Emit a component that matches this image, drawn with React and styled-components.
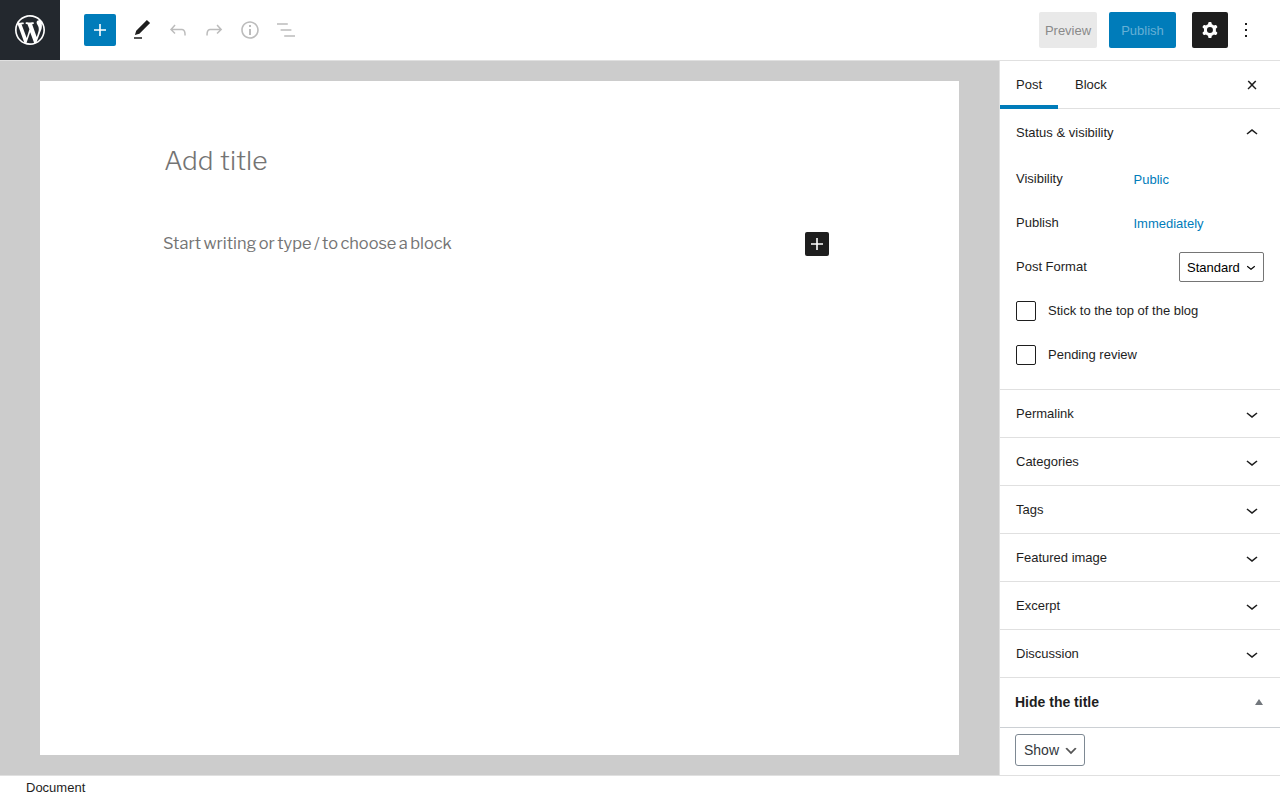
import React from 'react';
import styled, { createGlobalStyle } from 'styled-components';

const GlobalStyle = createGlobalStyle`
    * {
        box-sizing: border-box;
    }

    body {
        margin: 0;
        background: #fff;
        color: #1e1e1e;
        font-family: "Liberation Sans", Arial, sans-serif;
        font-size: 13px;
        line-height: 18px;
    }

    button {
        font-family: inherit;
        font-size: 13px;
        border: 0;
        padding: 0;
        background: none;
        color: inherit;
    }

    svg {
        display: block;
        fill: currentColor;
        flex: none;
    }
`;

const Page = styled.div`
    height: 800px;
    display: flex;
    flex-direction: column;
    overflow: hidden;
`;

const Header = styled.header`
    height: 61px;
    display: flex;
    align-items: flex-start;
    border-bottom: 1px solid #e0e0e0;
`;

const Logo = styled.a`
    width: 60px;
    height: 60px;
    display: flex;
    align-items: center;
    justify-content: center;
    background: #23282e;
    color: #fff;
`;

const Toolbar = styled.div`
    height: 60px;
    display: flex;
    align-items: center;
    padding-left: 24px;
`;

const ToolButton = styled.button`
    width: 36px;
    height: 36px;
    display: flex;
    align-items: center;
    justify-content: center;
    color: ${props => props.$disabled ? '#bcbcbc' : '#1e1e1e'};
`;

const InsertButton = styled(ToolButton)`
    width: 32px;
    height: 32px;
    margin-right: 8px;
    border-radius: 2px;
    background: #007cba;
    color: #fff;
`;

const Settings = styled.div`
    height: 60px;
    margin-left: auto;
    padding-right: 16px;
    display: flex;
    align-items: center;
`;

const TextButton = styled.button`
    width: ${props => props.$width}px;
    height: 36px;
    padding-top: 1px;
    margin-right: ${props => props.$gap}px;
    border-radius: 2px;
    background: ${props => props.$primary ? '#007cba' : '#e9e9e9'};
    color: ${props => props.$primary ? '#66b0d6' : '#8a8a8a'};
`;

const CogButton = styled(ToolButton)`
    border-radius: 2px;
    background: #1e1e1e;
    color: #fff;
`;

const Body = styled.div`
    flex: 1;
    min-height: 0;
    display: flex;
`;

const Editor = styled.main`
    flex: 1;
    padding: 20px 40px;
    background: #ccc;
`;

const Canvas = styled.div`
    height: 100%;
    padding: 59px 130px 0 123px;
    background: #fff;
    color: #747474;
    font-family: "Libre Franklin", "Open Sans", sans-serif;
`;

const Title = styled.h1`
    margin: 0;
    padding-left: 1px;
    font-size: 26.4px;
    font-weight: 300;
    line-height: 40px;
    word-spacing: 1px;
`;

const Block = styled.div`
    margin-top: 52px;
    height: 24px;
    display: flex;
    align-items: center;
    justify-content: space-between;
`;

const Paragraph = styled.p`
    margin: 0;
    padding-bottom: 2px;
    font-size: 16.4px;
    line-height: 24px;
    word-spacing: -1.1px;
`;

const BlockInserter = styled.button`
    width: 24px;
    height: 24px;
    border-radius: 2px;
    background: #1e1e1e;
    color: #fff;
`;

const Sidebar = styled.aside`
    width: 281px;
    border-left: 1px solid #e0e0e0;
    overflow: hidden;
`;

const Tabs = styled.div`
    height: 48px;
    display: flex;
    align-items: stretch;
    box-shadow: inset 0 -1px 0 #e0e0e0;
`;

const Tab = styled.button`
    padding: 0 16px 1px;
    margin-right: 1px;
    box-shadow: ${props => props.$active ? 'inset 0 -4px 0 #007cba' : 'none'};
`;

const CloseButton = styled(ToolButton)`
    width: 24px;
    height: 48px;
    margin: 0 16px 0 auto;
`;

const Panel = styled.section`
    border-bottom: 1px solid #e0e0e0;
`;

const PanelHead = styled.h2`
    margin: 0;
    height: ${props => props.$open ? 48 : 47}px;
    padding: 0 16px;
    display: flex;
    align-items: center;
    justify-content: space-between;
    font-size: 13px;
    font-weight: 400;
`;

const PanelBody = styled.div`
    padding: 0 16px 12px;
`;

const Row = styled.div`
    height: 44px;
    display: flex;
    align-items: center;
`;

const Label = styled.span`
    width: 117.5px;
    padding-bottom: 1px;
`;

const LinkButton = styled.button`
    color: #007cba;
`;

const Select = styled.div`
    width: 85px;
    height: 30px;
    margin-left: auto;
    padding: 0 3px 0 7px;
    display: flex;
    align-items: center;
    justify-content: space-between;
    border: 1px solid #757575;
    border-radius: 2px;
    color: #000;
    line-height: 16px;

    span {
        padding-top: 2px;
    }
`;

const Checkbox = styled.span`
    width: 20px;
    height: 20px;
    margin-right: 12px;
    border: 1px solid #1e1e1e;
    border-radius: 2px;
`;

const CheckLabel = styled.span`
    padding-bottom: 1px;
`;

const MetaHead = styled.h2`
    margin: 0;
    height: 50px;
    padding: 0 17px 2px 15px;
    display: flex;
    align-items: center;
    justify-content: space-between;
    border-bottom: 1px solid #ccd0d4;
    font-size: 14px;
    font-weight: 700;
`;

const Triangle = styled.span`
    border: 4px solid transparent;
    border-top: 0;
    border-bottom: 6px solid #72777c;
`;

const MetaSelect = styled(Select)`
    width: 70px;
    height: 32px;
    margin: 6px 0 0 15px;
    padding: 0 5px 0 8px;
    border-color: #7e8993;
    border-radius: 3px;
    color: #32373c;
    font-size: 14px;

    span {
        padding-top: 0;
    }

    svg {
        margin-top: 1px;
        fill: #555;
    }
`;

const Footer = styled.footer`
    height: 25px;
    padding-left: 26px;
    border-top: 1px solid #e0e0e0;
    line-height: 23px;
`;

const paths = {
    plus: 'M18 11.2h-5.2V6h-1.6v5.2H6v1.6h5.2V18h1.6v-5.2H18z',
    edit: 'M20.1 5.1L16.9 2 6.2 12.7l-1.3 4.4 4.5-1.3L20.1 5.1zM4 20.8h8v-1.5H4v1.5z',
    undo: 'M18.3 11.7c-.6-.6-1.4-.9-2.3-.9H6.7l2.9-3.3-1.1-1-4.5 5L8.5 16l1-1-2.7-2.7H16c.5 0 .9.2 1.3.5 1 1 1 3.4 1 4.5v.3h1.5v-.2c0-1.5 0-4.3-1.5-5.7z',
    redo: 'M15.6 6.5l-1.1 1 2.9 3.3H8c-.9 0-1.7.3-2.3.9-1.4 1.5-1.4 4.2-1.4 5.6v.2h1.5v-.3c0-1.1 0-3.5 1-4.5.3-.3.7-.5 1.3-.5h9.2L14.5 15l1.1 1.1 4.6-4.6-4.6-5z',
    info: 'M12 3.2c-4.8 0-8.8 3.9-8.8 8.8 0 4.8 3.9 8.8 8.8 8.8 4.8 0 8.8-3.9 8.8-8.8 0-4.8-4-8.8-8.8-8.8zm0 16c-4 0-7.2-3.3-7.2-7.2C4.8 8 8 4.8 12 4.8s7.2 3.3 7.2 7.2c0 4-3.2 7.2-7.2 7.2zM11 17h2v-6h-2v6zm0-8h2V7h-2v2z',
    list: 'M13.8 5.2H3v1.5h10.8V5.2zm-3.6 12v1.5H21v-1.5H10.2zm7.2-6H6.6v1.5h10.8v-1.5z',
    cog: 'M10.289 4.836A1 1 0 0111.275 4h1.306a1 1 0 01.987.836l.244 1.466c.787.26 1.503.679 2.108 1.218l1.393-.522a1 1 0 011.216.437l.653 1.13a1 1 0 01-.23 1.273l-1.148.944a6.025 6.025 0 010 2.435l1.149.946a1 1 0 01.23 1.272l-.653 1.13a1 1 0 01-1.216.437l-1.394-.522c-.605.54-1.32.958-2.108 1.218l-.244 1.466a1 1 0 01-.987.836h-1.306a1 1 0 01-.986-.836l-.244-1.466a5.995 5.995 0 01-2.108-1.218l-1.394.522a1 1 0 01-1.217-.436l-.653-1.131a1 1 0 01.23-1.272l1.149-.946a6.026 6.026 0 010-2.435l-1.148-.944a1 1 0 01-.23-1.272l.653-1.131a1 1 0 011.217-.437l1.393.522a5.994 5.994 0 012.108-1.218l.244-1.466zM14.929 12a3 3 0 11-6 0 3 3 0 016 0z',
    more: 'M13 19h-2v-2h2v2zm0-6h-2v-2h2v2zm0-6h-2V5h2v2z',
    close: 'M13 11.9l3.3-3.4-1.1-1-3.2 3.3-3.2-3.3-1.1 1 3.3 3.4-3.5 3.6 1 1L12 13l3.5 3.5 1-1z',
    up: 'M6.5 12.4L12 8l5.5 4.4-.9 1.2L12 10l-4.5 3.6-1-1.2z',
    down: 'M17.5 11.6L12 16l-5.5-4.4.9-1.2L12 14l4.5-3.6 1 1.2z',
    arrow: 'M5 6l5 5 5-5 2 1-7 7-7-7 2-1z',
    wordpress: 'M20 10c0-5.51-4.49-10-10-10C4.48 0 0 4.49 0 10c0 5.52 4.48 10 10 10 5.51 0 10-4.48 10-10zM7.78 15.37L4.37 6.22c.55-.02 1.17-.08 1.17-.08.5-.06.44-1.13-.06-1.11 0 0-1.45.11-2.37.11-.18 0-.37 0-.58-.01C4.12 2.69 6.87 1.11 10 1.11c2.33 0 4.45.87 6.05 2.34-.68-.11-1.65.39-1.65 1.58 0 .74.45 1.36.9 2.1.35.61.55 1.36.55 2.46 0 1.49-1.4 5-1.4 5l-3.03-8.37c.54-.02.82-.17.82-.17.5-.05.44-1.25-.06-1.22 0 0-1.44.12-2.38.12-.87 0-2.33-.12-2.33-.12-.5-.03-.56 1.2-.06 1.22l.92.08 1.26 3.41zM17.41 10c.24-.64.74-1.87.43-4.25.7 1.29 1.05 2.71 1.05 4.25 0 3.29-1.73 6.24-4.4 7.78.97-2.59 1.94-5.2 2.92-7.78zM6.1 18.09C3.12 16.65 1.11 13.53 1.11 10c0-1.3.23-2.48.72-3.59C3.25 10.3 4.67 14.2 6.1 18.09zm4.03-6.63l2.58 6.98c-.86.29-1.76.45-2.71.45-.79 0-1.57-.11-2.29-.33.81-2.38 1.62-4.74 2.42-7.1z',
};

const Icon = ({ name, size = 24, viewBox = '0 0 24 24' }) => (
    <svg width={size} height={size} viewBox={viewBox} aria-hidden="true">
        <path fillRule={name === 'cog' ? 'evenodd' : undefined} d={paths[name]} />
    </svg>
);

const closedPanels = ['Permalink', 'Categories', 'Tags', 'Featured image', 'Excerpt', 'Discussion'];

const App = () => {
    return (
        <Page>
            <GlobalStyle />
            <Header>
                <Logo><Icon name="wordpress" size={36} viewBox="-2 -2 24 24" /></Logo>
                <Toolbar>
                    <InsertButton><Icon name="plus" /></InsertButton>
                    <ToolButton><Icon name="edit" /></ToolButton>
                    <ToolButton $disabled><Icon name="undo" /></ToolButton>
                    <ToolButton $disabled><Icon name="redo" /></ToolButton>
                    <ToolButton $disabled><Icon name="info" /></ToolButton>
                    <ToolButton $disabled><Icon name="list" /></ToolButton>
                </Toolbar>
                <Settings>
                    <TextButton $width={58} $gap={12}>Preview</TextButton>
                    <TextButton $width={67} $gap={16} $primary>Publish</TextButton>
                    <CogButton><Icon name="cog" /></CogButton>
                    <ToolButton><Icon name="more" /></ToolButton>
                </Settings>
            </Header>
            <Body>
                <Editor>
                    <Canvas>
                        <Title>Add title</Title>
                        <Block>
                            <Paragraph>Start writing or type / to choose a block</Paragraph>
                            <BlockInserter><Icon name="plus" /></BlockInserter>
                        </Block>
                    </Canvas>
                </Editor>
                <Sidebar>
                    <Tabs>
                        <Tab $active>Post</Tab>
                        <Tab>Block</Tab>
                        <CloseButton><Icon name="close" /></CloseButton>
                    </Tabs>
                    <Panel>
                        <PanelHead $open>Status &amp; visibility<Icon name="up" /></PanelHead>
                        <PanelBody>
                            <Row><Label>Visibility</Label><LinkButton>Public</LinkButton></Row>
                            <Row><Label>Publish</Label><LinkButton>Immediately</LinkButton></Row>
                            <Row>
                                <Label>Post Format</Label>
                                <Select><span>Standard</span><Icon name="down" size={18} /></Select>
                            </Row>
                            <Row><Checkbox /><CheckLabel>Stick to the top of the blog</CheckLabel></Row>
                            <Row><Checkbox /><CheckLabel>Pending review</CheckLabel></Row>
                        </PanelBody>
                    </Panel>
                    {closedPanels.map(title => (
                        <Panel key={title}>
                            <PanelHead>{title}<Icon name="down" /></PanelHead>
                        </Panel>
                    ))}
                    <MetaHead>Hide the title<Triangle /></MetaHead>
                    <MetaSelect><span>Show</span><Icon name="arrow" size={16} viewBox="0 0 20 20" /></MetaSelect>
                </Sidebar>
            </Body>
            <Footer>Document</Footer>
        </Page>
    );
};

export default App;
